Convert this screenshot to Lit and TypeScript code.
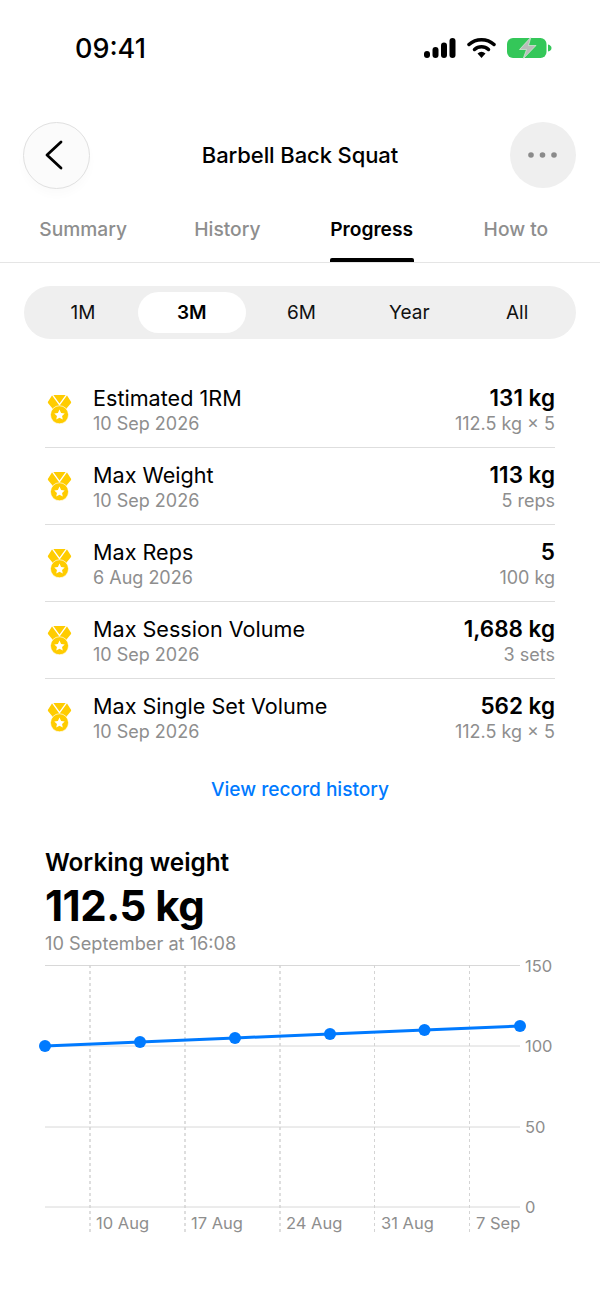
import { LitElement, html, css, svg } from "lit";
import { customElement } from "lit/decorators.js";

const tabs = ["Summary", "History", "Progress", "How to"];
const ranges = ["1M", "3M", "6M", "Year", "All"];
const records = [
  ["Estimated 1RM", "10 Sep 2026", "131 kg", "112.5 kg × 5"],
  ["Max Weight", "10 Sep 2026", "113 kg", "5 reps"],
  ["Max Reps", "6 Aug 2026", "5", "100 kg"],
  ["Max Session Volume", "10 Sep 2026", "1,688 kg", "3 sets"],
  ["Max Single Set Volume", "10 Sep 2026", "562 kg", "112.5 kg × 5"],
];
const gridY = [0.5, 81, 162, 242];
const labelsY = ["150", "100", "50", "0"];
const vx = [45, 140, 235, 330, 425];
const xLabels = ["10 Aug", "17 Aug", "24 Aug", "31 Aug", "7 Sep"];
const pts: [number, number][] = [[5, 81], [100, 77], [195, 73], [290, 69], [384.5, 65], [480, 61]];
const vLines: [number, number][] = [[50, 1.5], [145, 1.5], [240, 1.5], [334.5, 1], [429.5, 1]];

const medal = html`<svg class="medal" viewBox="0 0 26 32" width="26" height="32">
  <path fill="#ffcc00" d="M5.500 1.500h15L25 8.500q.4.800-.2 1.500L19 17H7L1.200 10q-.6-.7-.2-1.500z"/>
  <path fill="none" stroke="#fff" stroke-width="1.400" d="M5.500 1 13 11.500 20.500 1"/>
  <circle cx="13" cy="22" r="9.400" fill="#ffcc00" stroke="#fff" stroke-width=".7"/>
  <path fill="#fff" d="m13 16.600 1.650 3.500 3.800.5-2.800 2.600.75 3.800-3.400-1.900-3.400 1.900.75-3.800-2.800-2.600 3.800-.5z"/>
</svg>`;

@customElement("app-root")
export class AppRoot extends LitElement {
  static styles = css`
    :host { display: block; width: 600px; height: 1304px; background: #fff; color: #000; font-family: Inter, "Liberation Sans", sans-serif; overflow: hidden; }
    .status { height: 96px; box-sizing: border-box; padding: 0 48px 0 75px; display: flex; align-items: center; justify-content: space-between; }
    .time { font-size: 27px; font-weight: 500; }
    .status-icons { display: flex; align-items: center; gap: 11px; }
    .header { margin-top: 26px; height: 66px; padding: 0 24px 0 23px; display: flex; align-items: center; justify-content: space-between; }
    .back, .more { width: 66px; height: 66px; border-radius: 50%; display: flex; align-items: center; justify-content: center; box-sizing: border-box; flex: none; }
    .back { width: 67px; height: 67px; background: #fbfbfb; border: 1px solid #e0e0e0; box-shadow: 0 6px 10px rgba(0,0,0,.02); }
    .chev { margin-right: 5px; }
    .more { background: #efefef; }
    .title { font-size: 22px; font-weight: 500; letter-spacing: -.1px; }
    .tabs { margin-top: 20px; height: 54px; border-bottom: 1px solid #e5e5e5; display: flex; padding: 0 12px 0 11px; }
    .tab { flex: 1; display: flex; justify-content: center; position: relative; padding-top: 9px; font-size: 19.200px; font-weight: 500; color: #8e8e8e; }
    .tab.on { color: #000; font-weight: 600; }
    .tab.on::after { content: ""; position: absolute; left: 30px; right: 30px; bottom: 0; height: 4px; border-radius: 2px 2px 0 0; background: #000; }
    .seg { margin: 23px 24px 0; height: 53px; border-radius: 26.500px; background: #efefef; display: flex; padding: 6px 5px; box-sizing: border-box; }
    .seg div { flex: 1; display: flex; align-items: center; justify-content: center; font-size: 19px; font-weight: 400; color: #111; }
    .seg div.on { margin: 0 2px 0 1px; background: #fff; border-radius: 20.500px; font-weight: 600; color: #000; }
    .records { margin: 32px 45px 0; }
    .row { height: 76px; border-bottom: 1px solid #dedede; display: flex; align-items: center; }
    .row:last-child { border-bottom: 0; }
    .medal { flex: none; margin: 0 21px 0 2px; width: 25px; }
    .main, .end { display: flex; flex-direction: column; gap: 0; padding-top: 3px; }
    .main { flex: 1; }
    .end { align-items: flex-end; }
    .name { font-size: 21.600px; line-height: 26px; font-weight: 400; }
    .val { font-size: 22.500px; line-height: 26px; font-weight: 600; }
    .sub { font-size: 18px; line-height: 25px; color: #8e8e8e; }
    .link { margin-top: 22px; text-align: center; font-size: 19.100px; line-height: 24px; font-weight: 500; color: #007aff; }
    .work { margin: 47px 45px 0; }
    .wt { font-size: 24.300px; line-height: 28px; font-weight: 600; }
    .big { font-size: 42px; line-height: 48px; font-weight: 700; letter-spacing: -.5px; margin-top: 6px; }
    .when { font-size: 18.200px; line-height: 22px; color: #8e8e8e; margin-top: 2px; }
    .chart { display: block; margin: 11px 0 0 40px; overflow: visible; }
    .chart text { font-family: Inter, sans-serif; font-size: 16.500px; fill: #8e8e8e; }
  `;

  render() {
    return html`
      <div class="status">
        <span class="time">09:41</span>
        <span class="status-icons">
          <svg width="32" height="20" viewBox="0 0 32 20">
            <rect x="0" y="13" width="6" height="7" rx="3" fill="#000"/>
            <rect x="8.500" y="9" width="6" height="11" rx="3" fill="#000"/>
            <rect x="17" y="4.500" width="6" height="15.500" rx="3" fill="#000"/>
            <rect x="25.500" y="0" width="6" height="20" rx="3" fill="#000"/>
          </svg>
          <svg width="29" height="22" viewBox="0 0 29 22">
            <path d="M2 7.500C9 1 20 1 27 7.500" fill="none" stroke="#000" stroke-width="3.500" stroke-linecap="round"/>
            <path d="M7.500 12.500C11.500 8.800 17.500 8.800 21.500 12.500" fill="none" stroke="#000" stroke-width="3.500" stroke-linecap="round"/>
            <path d="M10.500 16.500Q14.500 13 18.500 16.500L14.500 21z" fill="#000"/>
          </svg>
          <svg width="45" height="22" viewBox="0 0 45 22">
            <rect x="0" y="1" width="39.500" height="20" rx="6" fill="#34c759"/>
            <path d="M41 7.500q3.500 1 3.500 3.500t-3.500 3.500z" fill="#34c759"/>
            <path d="M24 0 12.500 12.500h7L16 22l13-13.500h-7.500z" fill="#b9bdba" stroke="#e8f5ea" stroke-width=".6"/>
          </svg>
        </span>
      </div>

      <div class="header">
        <div class="back">
          <svg class="chev" width="18" height="30" viewBox="0 0 18 30"><path d="M16 2 2 15 16 28" fill="none" stroke="#000" stroke-width="2.800" stroke-linecap="round" stroke-linejoin="round"/></svg>
        </div>
        <div class="title">Barbell Back Squat</div>
        <div class="more">
          <svg width="30" height="6" viewBox="0 0 30 6" fill="#8a8a8a"><circle cx="3" cy="3" r="2.800"/><circle cx="14.500" cy="3" r="2.800"/><circle cx="26" cy="3" r="2.800"/></svg>
        </div>
      </div>

      <div class="tabs">
        ${tabs.map((t) => html`<div class="tab ${t === "Progress" ? "on" : ""}">${t}</div>`)}
      </div>

      <div class="seg">
        ${ranges.map((r) => html`<div class="${r === "3M" ? "on" : ""}">${r}</div>`)}
      </div>

      <div class="records">
        ${records.map((r) => html`<div class="row">
          ${medal}
          <div class="main"><div class="name">${r[0]}</div><div class="sub">${r[1]}</div></div>
          <div class="end"><div class="val">${r[2]}</div><div class="sub">${r[3]}</div></div>
        </div>`)}
      </div>

      <div class="link">View record history</div>

      <div class="work">
        <div class="wt">Working weight</div>
        <div class="big">112.5 kg</div>
        <div class="when">10 September at 16:08</div>
      </div>

      <svg class="chart" width="560" height="270" viewBox="0 0 560 270">
        ${gridY.map((y, i) => svg`
          <line x1="5" x2="480" y1=${y} y2=${y} stroke="#d8d8d8" stroke-width="1"/>
          <text x="485" y=${y + 6}>${labelsY[i]}</text>`)}
        ${vLines.map(([x, w]) => svg`
          <line x1=${x} x2=${x} y1="0" y2="267" stroke="#d4d4d4" stroke-width=${w} stroke-dasharray="3 3"/>`)}
        ${vx.map((x, i) => svg`<text x=${x + 11} y="264">${xLabels[i]}</text>`)}
        <polyline points=${pts.map((p) => p.join(",")).join(" ")} fill="none" stroke="#007aff" stroke-width="3"/>
        ${pts.map((p) => svg`<circle cx=${p[0]} cy=${p[1]} r="6" fill="#007aff"/>`)}
      </svg>
    `;
  }
}
